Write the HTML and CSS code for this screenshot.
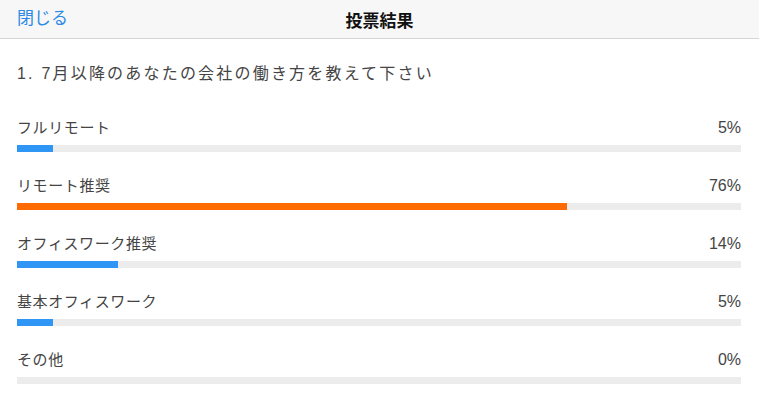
FILE: index.html
```html
<!DOCTYPE html>
<html lang="ja">
<head>
  <meta charset="UTF-8" />
  <meta name="viewport" content="width=device-width, initial-scale=1.0"/>
  <title>投票結果</title>
  <link rel="stylesheet" href="styles.css">
</head>
<body>
  <header class="topbar">
    <a class="close-link" href="#">閉じる</a>
    <h1 class="topbar-title">投票結果</h1>
  </header>

  <main class="results">
    <p class="question">1. 7月以降のあなたの会社の働き方を教えて下さい</p>

    <!-- result rows -->
    <div class="result">
      <div class="result-head"><span>フルリモート</span><span>5%</span></div>
      <div class="track"><div class="fill" style="width: 5%"></div></div>
    </div>
    <div class="result">
      <div class="result-head"><span>リモート推奨</span><span>76%</span></div>
      <div class="track"><div class="fill top" style="width: 76%"></div></div>
    </div>
    <div class="result">
      <div class="result-head"><span>オフィスワーク推奨</span><span>14%</span></div>
      <div class="track"><div class="fill" style="width: 14%"></div></div>
    </div>
    <div class="result">
      <div class="result-head"><span>基本オフィスワーク</span><span>5%</span></div>
      <div class="track"><div class="fill" style="width: 5%"></div></div>
    </div>
    <div class="result">
      <div class="result-head"><span>その他</span><span>0%</span></div>
      <div class="track"><div class="fill" style="width: 0%"></div></div>
    </div>
  </main>
</body>
</html>
```

FILE: styles.css
```css
body {
  font-family: 'Liberation Sans', 'Noto Sans CJK JP', sans-serif;
  margin: 0;
  padding: 0;
  background-color: #ffffff;
  color: #444;
}

.topbar {
  position: relative;
  height: 38px;
  background: #f7f7f7;
  border-bottom: 1px solid #d6d6d6;
  display: flex;
  align-items: center;
  justify-content: center;
}

.close-link {
  position: absolute;
  left: 17px;
  top: 0;
  line-height: 37px;
  font-size: 17px;
  color: #2f8ae5;
  text-decoration: none;
}

.topbar-title {
  margin: 0;
  font-size: 17px;
  font-weight: bold;
  color: #111;
}

.results {
  padding: 0 18px 0 17px;
}

.question {
  margin: 0;
  padding: 25px 0 34px;
  font-size: 16px;
  line-height: 20px;
  letter-spacing: 2.2px;
  color: #444;
}

.result {
  padding-bottom: 24px;
}

.result-head {
  display: flex;
  justify-content: space-between;
  font-size: 15px;
  line-height: 20px;
  letter-spacing: 0.6px;
  margin-bottom: 7px;
}

.result-head span:last-child {
  font-size: 16px;
  letter-spacing: 0;
}

.track {
  height: 7px;
  background: #ececec;
}

.fill {
  height: 100%;
  background: #3096f5;
}

.fill.top {
  background: #ff6b00;
}
```
